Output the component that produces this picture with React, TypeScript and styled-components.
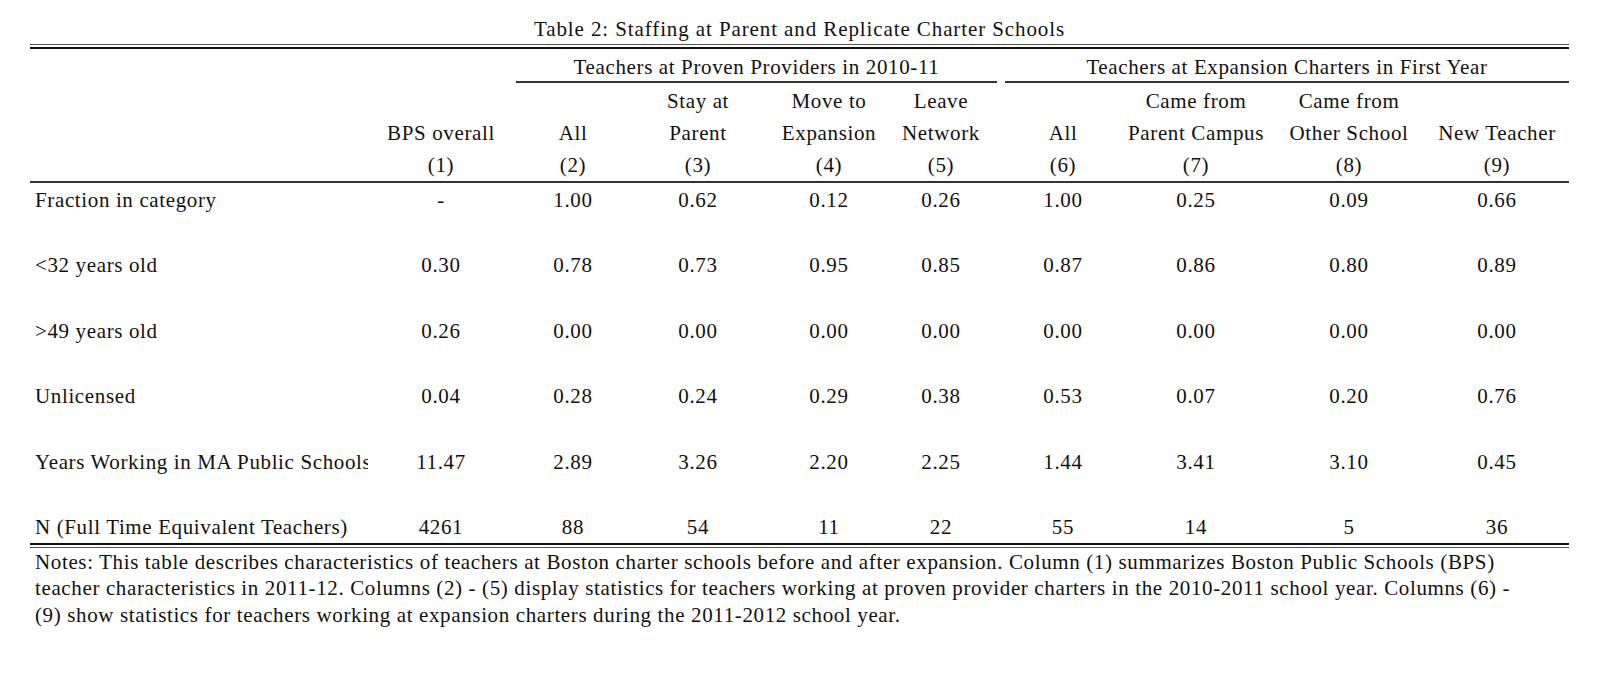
import React from 'react';
import styled, { createGlobalStyle } from 'styled-components';

const GlobalStyle = createGlobalStyle`
  html, body {
    margin: 0;
    padding: 0;
    background: #ffffff;
  }
  body {
    font-family: "Liberation Serif", "Times New Roman", serif;
    color: #111111;
  }
`;

// column widths chosen so each cell is centred on the reference column centre
const COLUMNS = '331px 160px 104px 146px 116px 108px 136px 130px 176px 120px 12px';

const Page = styled.div`
  width: 1539px;
  padding-left: 30px;
  font-size: 21px;
  letter-spacing: 0.63px;
`;

const Title = styled.div`
  text-align: center;
  padding-top: 15px;
  line-height: 29px;
  height: 29px;
  letter-spacing: 0.9px;
  white-space: nowrap;
`;

const Rule = styled.div<{ $thickFirst?: boolean }>`
  height: 2px;
  border-top: ${(p) => (p.$thickFirst ? '2px solid #111' : '1px solid #555')};
  border-bottom: ${(p) => (p.$thickFirst ? '1px solid #555' : '2px solid #111')};
`;

const GroupRow = styled.div`
  display: flex;
  padding-top: 5px;
  height: 29px;
`;

const GroupSpacer = styled.div`
  width: 486px;
  flex: none;
`;

const GroupCell = styled.div<{ $width?: number }>`
  ${(p) => (p.$width ? `width: ${p.$width}px; flex: none;` : 'flex: 1;')}
  line-height: 27px;
  text-align: center;
  white-space: nowrap;
  border-bottom: 2px solid #333;
  margin-right: ${(p) => (p.$width ? '8px' : '0')};
`;

const Grid = styled.div`
  display: grid;
  grid-template-columns: ${COLUMNS};
`;

const Header = styled(Grid)`
  padding-top: 2px;
  border-bottom: 2px solid #333;
`;

const HeadCell = styled.div`
  display: flex;
  flex-direction: column;
  align-items: center;
  min-width: 0;
`;

const HeadLine = styled.div`
  height: 32px;
  line-height: 32px;
  white-space: nowrap;
`;

const DataRow = styled(Grid)<{ $tall?: boolean }>`
  height: ${(p) => (p.$tall ? '65.4px' : '32.8px')};
`;

const Cell = styled.div`
  display: flex;
  justify-content: center;
  padding-top: 2px;
  line-height: 31px;
  white-space: nowrap;
  min-width: 0;
`;

const LabelCell = styled.div`
  padding-top: 2px;
  line-height: 31px;
  min-width: 0;
`;

const LabelText = styled.span`
  display: block;
  width: 338px;
  padding-left: 5px;
  box-sizing: border-box;
  overflow: hidden;
  white-space: nowrap;
`;

const Notes = styled.div`
  padding-top: 1px;
`;

const NoteLine = styled.div`
  padding-left: 5px;
  line-height: 26.5px;
  white-space: nowrap;
`;

const headers: [string, string, string][] = [
  ['', 'BPS overall', '(1)'],
  ['', 'All', '(2)'],
  ['Stay at', 'Parent', '(3)'],
  ['Move to', 'Expansion', '(4)'],
  ['Leave', 'Network', '(5)'],
  ['', 'All', '(6)'],
  ['Came from', 'Parent Campus', '(7)'],
  ['Came from', 'Other School', '(8)'],
  ['', 'New Teacher', '(9)'],
];

const rows: { label: string; values: string[] }[] = [
  { label: 'Fraction in category', values: ['-', '1.00', '0.62', '0.12', '0.26', '1.00', '0.25', '0.09', '0.66'] },
  { label: '<32 years old', values: ['0.30', '0.78', '0.73', '0.95', '0.85', '0.87', '0.86', '0.80', '0.89'] },
  { label: '>49 years old', values: ['0.26', '0.00', '0.00', '0.00', '0.00', '0.00', '0.00', '0.00', '0.00'] },
  { label: 'Unlicensed', values: ['0.04', '0.28', '0.24', '0.29', '0.38', '0.53', '0.07', '0.20', '0.76'] },
  { label: 'Years Working in MA Public Schools', values: ['11.47', '2.89', '3.26', '2.20', '2.25', '1.44', '3.41', '3.10', '0.45'] },
  { label: 'N (Full Time Equivalent Teachers)', values: ['4261', '88', '54', '11', '22', '55', '14', '5', '36'] },
];

const notes = [
  'Notes: This table describes characteristics of teachers at Boston charter schools before and after expansion. Column (1) summarizes Boston Public Schools (BPS)',
  'teacher characteristics in 2011-12. Columns (2) - (5) display statistics for teachers working at proven provider charters in the 2010-2011 school year. Columns (6) -',
  '(9) show statistics for teachers working at expansion charters during the 2011-2012 school year.',
];

export default function App() {
  return (
    <>
      <GlobalStyle />
      <Page>
        <Title>Table 2: Staffing at Parent and Replicate Charter Schools</Title>
        <Rule />
        <GroupRow>
          <GroupSpacer />
          <GroupCell $width={481}>Teachers at Proven Providers in 2010-11</GroupCell>
          <GroupCell>Teachers at Expansion Charters in First Year</GroupCell>
        </GroupRow>
        <Header>
          <div />
          {headers.map((h, i) => (
            <HeadCell key={i}>
              <HeadLine>{h[0]}</HeadLine>
              <HeadLine>{h[1]}</HeadLine>
              <HeadLine>{h[2]}</HeadLine>
            </HeadCell>
          ))}
          <div />
        </Header>
        {rows.map((r, i) => (
          <DataRow key={r.label} $tall={i < rows.length - 1}>
            <LabelCell>
              <LabelText>{r.label}</LabelText>
            </LabelCell>
            {r.values.map((v, j) => (
              <Cell key={j}>{v}</Cell>
            ))}
            <div />
          </DataRow>
        ))}
        <Rule $thickFirst />
        <Notes>
          {notes.map((n) => (
            <NoteLine key={n}>{n}</NoteLine>
          ))}
        </Notes>
      </Page>
    </>
  );
}
